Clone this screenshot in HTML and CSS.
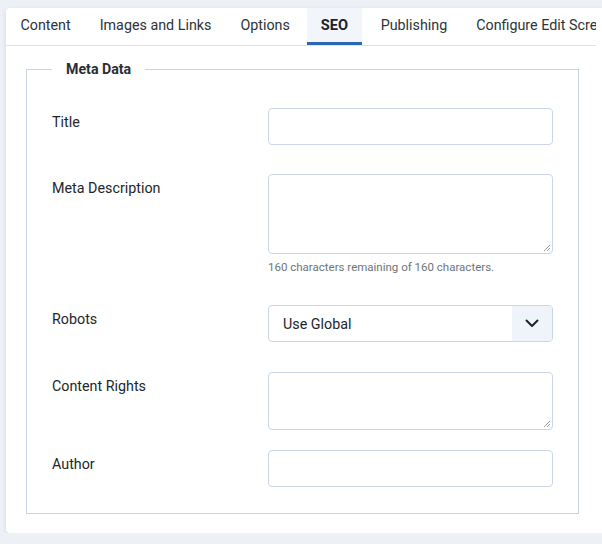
FILE: index.html
```
<!DOCTYPE html>
<html>
<head>
<meta charset="utf-8">
<link rel="stylesheet" href="styles.css">
</head>
<body>
<div class="card">
  <div class="tabs">
    <div class="tab">Content</div>
    <div class="tab">Images and Links</div>
    <div class="tab">Options</div>
    <div class="tab active">SEO</div>
    <div class="tab">Publishing</div>
    <div class="tab">Configure Edit Screen</div>
  </div>
  <div class="panel">
    <fieldset class="meta">
      <legend>Meta Data</legend>
      <div class="row r-title">
        <label class="lbl">Title</label>
        <div class="ctl"><div class="input"></div></div>
      </div>
      <div class="row r-desc">
        <label class="lbl">Meta Description</label>
        <div class="ctl">
          <div class="textarea tall"><svg class="grip" width="8" height="8" viewBox="0 0 8 8"><path d="M7 1L1 7M7 4L4 7" stroke="#8a8f96" stroke-width="0.9"/></svg></div>
          <div class="help">160 characters remaining of 160 characters.</div>
        </div>
      </div>
      <div class="row r-robots">
        <label class="lbl">Robots</label>
        <div class="ctl">
          <div class="select"><span class="sel-text">Use Global</span><span class="caret"><svg width="14" height="9" viewBox="0 0 14 9"><path d="M1.5 1.5L7 7L12.5 1.5" fill="none" stroke="#1f2328" stroke-width="2" stroke-linecap="round" stroke-linejoin="round"/></svg></span></div>
        </div>
      </div>
      <div class="row r-rights">
        <label class="lbl">Content Rights</label>
        <div class="ctl"><div class="textarea mid"><svg class="grip" width="8" height="8" viewBox="0 0 8 8"><path d="M7 1L1 7M7 4L4 7" stroke="#8a8f96" stroke-width="0.9"/></svg></div></div>
      </div>
      <div class="row r-author">
        <label class="lbl">Author</label>
        <div class="ctl"><div class="input"></div></div>
      </div>
    </fieldset>
  </div>
</div>
</body>
</html>
```
FILE: styles.css
```
* { box-sizing: border-box; }
html, body { margin: 0; padding: 0; }
body {
  background: #edf0f5;
  font-family: Roboto, "Noto Sans", sans-serif;
  color: #22262a;
  font-size: 14px;
  overflow: hidden;
}
.card {
  margin: 8px 0 0 6px;
  width: 600px;
  height: 525px;
  background: #fff;
  border-radius: 4px;
  box-shadow: 0 2px 4px rgba(120,140,170,0.22);
  overflow: hidden;
}
.tabs {
  display: flex;
  width: 590px;
  height: 38px;
  border-bottom: 1px solid #dde3ea;
  white-space: nowrap;
  overflow: hidden;
}
.tab {
  padding: 0 14.5px;
  line-height: 35px;
  border-bottom: 3px solid transparent;
  color: #2d3338;
  flex-shrink: 0;
  font-size: 14.3px;
}
.tab.active {
  background: #f2f5fa;
  border-bottom-color: #2a68b5;
  font-weight: 700;
  color: #1f2328;
  padding: 0 14px;
  margin: 0 4px 0 2.5px;
  font-size: 14.6px;
}
.panel {
  width: 590px;
  padding: 13px 17px 0 20px;
}
.meta {
  margin: 0;
  border: 1px solid #c8d3e6;
  padding: 29px 25px 26px 25px;
  min-width: 0;
}
.meta legend {
  margin-left: 0;
  padding: 0 14px;
  font-weight: 700;
  line-height: 20px;
  font-size: 14.2px;
  color: #2a2e33;
}
.row {
  display: grid;
  grid-template-columns: 216px 285px;
  margin-bottom: 29px;
}
.r-desc { margin-bottom: 31px; }
.r-robots { margin-bottom: 30px; }
.r-rights { margin-bottom: 20px; }
.r-author { margin-bottom: 0; }
.lbl {
  padding-top: 4px;
  line-height: 20px;
  font-size: 14.3px;
}
.input, .textarea, .select {
  border: 1px solid #cbd6e6;
  border-radius: 4px;
  background: #fff;
}
.input { height: 37px; }
.textarea { position: relative; }
.textarea.tall { height: 80px; }
.textarea.mid { height: 58px; }
.grip { position: absolute; right: 1px; bottom: 1px; }
.help {
  margin-top: 7px;
  font-size: 11.5px;
  color: #6d7479;
  line-height: 13px;
}
.select {
  height: 37px;
  display: flex;
  align-items: center;
  overflow: hidden;
}
.sel-text {
  flex: 1;
  padding-left: 14px;
  font-size: 14.3px;
}
.caret {
  width: 40px;
  height: 100%;
  background: #eff3fa;
  display: flex;
  align-items: center;
  justify-content: center;
}
```
